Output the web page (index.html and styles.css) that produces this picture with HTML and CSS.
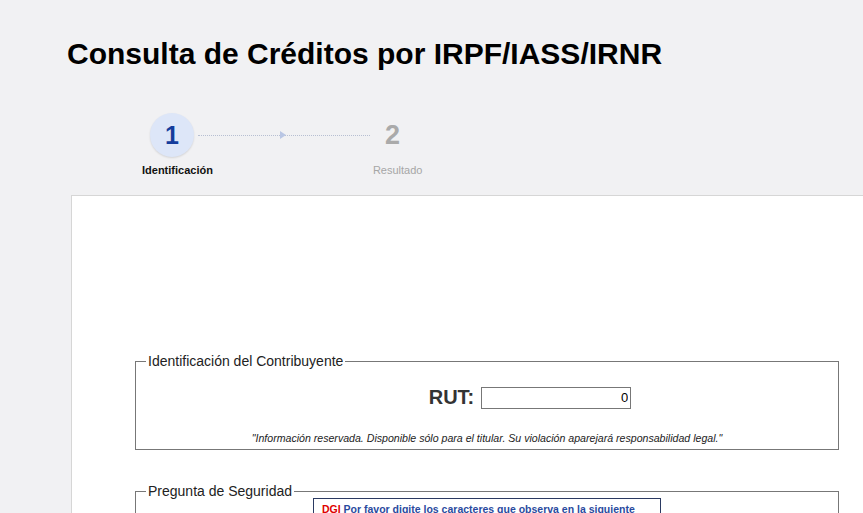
FILE: index.html
```html
<!DOCTYPE html>
<html lang="es">
<head>
<meta charset="utf-8">
<title>Consulta de Créditos por IRPF/IASS/IRNR</title>
<link rel="stylesheet" href="styles.css">
</head>
<body>
<div class="page">
  <h1 class="title">Consulta de Créditos por IRPF/IASS/IRNR</h1>
  <div class="stepper">
    <div class="steps-top">
      <div class="circle">1</div>
      <div class="connector"><span class="arrow"></span></div>
      <div class="num-off">2</div>
    </div>
    <div class="steps-labels">
      <span class="label-on">Identificación</span>
      <span class="label-off">Resultado</span>
    </div>
  </div>
  <div class="panel">
    <fieldset class="box">
      <legend>Identificación del Contribuyente</legend>
      <div class="rut-row">
        <label class="rut-label" for="rut">RUT:</label>
        <input class="rut-input" id="rut" type="text" value="0">
      </div>
      <p class="note">"Información reservada. Disponible sólo para el titular. Su violación aparejará responsabilidad legal."</p>
    </fieldset>
    <fieldset class="box box2">
      <legend>Pregunta de Seguridad</legend>
      <div class="captcha">
        <span class="dgi">DGI</span> <span class="captcha-text">Por favor digite los caracteres que observa en la siguiente</span>
      </div>
    </fieldset>
  </div>
</div>
</body>
</html>
```
FILE: styles.css
```css
html, body {
  margin: 0;
  padding: 0;
  background: #f1f1f3;
  overflow: hidden;
  height: 513px;
}
body {
  font-family: "Liberation Sans", Arial, sans-serif;
  color: #000;
}
.page {
  padding-top: 36px;
}
.title {
  margin: 0 0 0 67px;
  font-size: 30px;
  line-height: 36px;
  font-weight: bold;
  color: #000;
}
.stepper {
  margin-top: 39px;
}
.steps-top {
  display: flex;
  align-items: center;
  padding-left: 150px;
  height: 48px;
}
.circle {
  width: 44px;
  height: 44px;
  border-radius: 50%;
  background: #dde6f8;
  box-shadow: 0 1px 2px rgba(0,0,0,0.12);
  color: #143c9c;
  font-weight: bold;
  font-size: 25px;
  display: flex;
  align-items: center;
  justify-content: center;
}
.connector {
  width: 172px;
  margin-left: 4px;
  border-top: 1px dotted #b7bfd2;
  position: relative;
  height: 0;
}
.arrow {
  position: absolute;
  left: 82px;
  top: -5px;
  width: 0;
  height: 0;
  border-top: 4px solid transparent;
  border-bottom: 4px solid transparent;
  border-left: 6px solid #b9c6e4;
}
.num-off {
  margin-left: 15px;
  color: #aaa;
  font-weight: bold;
  font-size: 27px;
}
.steps-labels {
  display: flex;
  padding-left: 142px;
  margin-top: 5px;
  font-size: 11px;
  font-weight: bold;
}
.label-on {
  color: #111;
}
.label-off {
  color: #a6a6a6;
  font-weight: normal;
  margin-left: 160px;
}
.panel {
  margin-top: 19px;
  margin-left: 71px;
  margin-right: -20px;
  background: #fff;
  border: 1px solid #d6d6d6;
  padding: 157px 0 40px 63px;
  min-height: 400px;
}
.box {
  width: 678px;
  margin: 0;
  border: 1px solid #777;
  padding: 5px 12px 5px 12px;
  font-size: 14px;
}
.box legend {
  color: #222;
  padding: 0 2px;
  margin-left: -2px;
  font-size: 14px;
}
.rut-row {
  display: flex;
  justify-content: center;
  align-items: center;
  padding-left: 86px;
  margin-top: 12px;
}
.rut-label {
  font-size: 20px;
  font-weight: bold;
  color: #333;
  margin-right: 7px;
}
.rut-input {
  width: 144px;
  height: 18px;
  border: 1px solid #777;
  padding: 1px 2px;
  text-align: right;
  font-family: "Liberation Sans", Arial, sans-serif;
  font-size: 13px;
  color: #000;
  margin: 0;
}
.note {
  margin: 23px 0 0 0;
  text-align: center;
  font-style: italic;
  font-size: 10.6px;
  color: #222;
}
.box2 {
  margin-top: 33px;
  height: 80px;
}
.captcha {
  width: 330px;
  margin: -6px 0 0 165px;
  border: 1px solid #2b3a62;
  padding: 4px 8px;
  font-size: 10.5px;
  font-weight: bold;
}
.dgi {
  color: #e00000;
}
.captcha-text {
  color: #2a4a9e;
}
```
